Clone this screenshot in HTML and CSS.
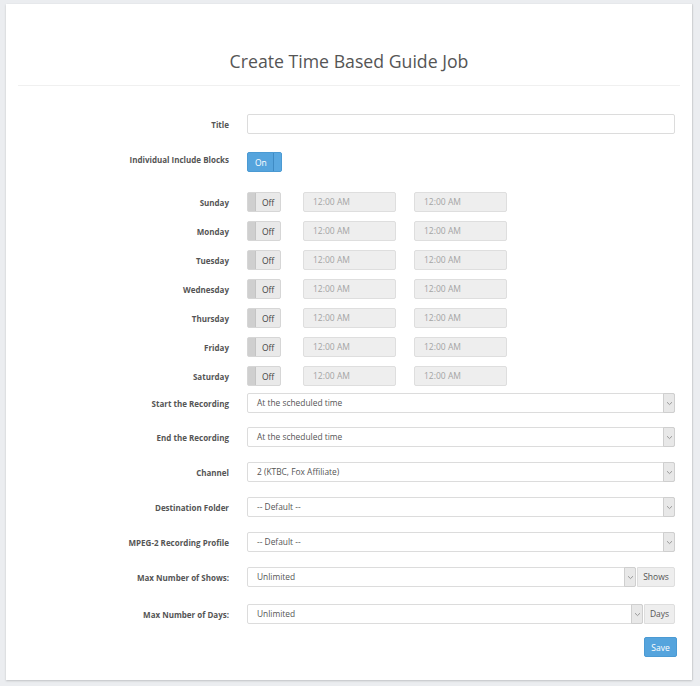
FILE: index.html
```html
<!DOCTYPE html>
<html>
<head>
<meta charset="utf-8">
<link rel="stylesheet" href="styles.css">
</head>
<body>
<div class="card">
  <h1 class="title">Create Time Based Guide Job</h1>
  <div class="rule"></div>
  <form class="form">
    <div class="row r-title">
      <label class="lbl">Title</label>
      <div class="ctl"><div class="input"></div></div>
    </div>
    <div class="row r-include">
      <label class="lbl">Individual Include Blocks</label>
      <div class="ctl"><div class="toggle on"><span class="t-text">On</span><span class="t-handle"></span></div></div>
    </div>
    <div class="row r-day first">
      <label class="lbl">Sunday</label>
      <div class="ctl"><div class="toggle off"><span class="t-handle"></span><span class="t-text">Off</span></div><div class="time">12:00 AM</div><div class="time">12:00 AM</div></div>
    </div>
    <div class="row r-day">
      <label class="lbl">Monday</label>
      <div class="ctl"><div class="toggle off"><span class="t-handle"></span><span class="t-text">Off</span></div><div class="time">12:00 AM</div><div class="time">12:00 AM</div></div>
    </div>
    <div class="row r-day">
      <label class="lbl">Tuesday</label>
      <div class="ctl"><div class="toggle off"><span class="t-handle"></span><span class="t-text">Off</span></div><div class="time">12:00 AM</div><div class="time">12:00 AM</div></div>
    </div>
    <div class="row r-day">
      <label class="lbl">Wednesday</label>
      <div class="ctl"><div class="toggle off"><span class="t-handle"></span><span class="t-text">Off</span></div><div class="time">12:00 AM</div><div class="time">12:00 AM</div></div>
    </div>
    <div class="row r-day">
      <label class="lbl">Thursday</label>
      <div class="ctl"><div class="toggle off"><span class="t-handle"></span><span class="t-text">Off</span></div><div class="time">12:00 AM</div><div class="time">12:00 AM</div></div>
    </div>
    <div class="row r-day">
      <label class="lbl">Friday</label>
      <div class="ctl"><div class="toggle off"><span class="t-handle"></span><span class="t-text">Off</span></div><div class="time">12:00 AM</div><div class="time">12:00 AM</div></div>
    </div>
    <div class="row r-day">
      <label class="lbl">Saturday</label>
      <div class="ctl"><div class="toggle off"><span class="t-handle"></span><span class="t-text">Off</span></div><div class="time">12:00 AM</div><div class="time">12:00 AM</div></div>
    </div>
    <div class="row r-sel first">
      <label class="lbl">Start the Recording</label>
      <div class="ctl"><div class="select"><span class="s-val">At the scheduled time</span><span class="s-arrow"><svg width="7" height="5" viewBox="0 0 7 5"><path d="M1 1.2 L3.5 3.6 L6 1.2" fill="none" stroke="#999" stroke-width="1"/></svg></span></div></div>
    </div>
    <div class="row r-sel second">
      <label class="lbl">End the Recording</label>
      <div class="ctl"><div class="select"><span class="s-val">At the scheduled time</span><span class="s-arrow"><svg width="7" height="5" viewBox="0 0 7 5"><path d="M1 1.2 L3.5 3.6 L6 1.2" fill="none" stroke="#999" stroke-width="1"/></svg></span></div></div>
    </div>
    <div class="row r-sel">
      <label class="lbl">Channel</label>
      <div class="ctl"><div class="select"><span class="s-val">2 (KTBC, Fox Affiliate)</span><span class="s-arrow"><svg width="7" height="5" viewBox="0 0 7 5"><path d="M1 1.2 L3.5 3.6 L6 1.2" fill="none" stroke="#999" stroke-width="1"/></svg></span></div></div>
    </div>
    <div class="row r-sel">
      <label class="lbl">Destination Folder</label>
      <div class="ctl"><div class="select"><span class="s-val">-- Default --</span><span class="s-arrow"><svg width="7" height="5" viewBox="0 0 7 5"><path d="M1 1.2 L3.5 3.6 L6 1.2" fill="none" stroke="#999" stroke-width="1"/></svg></span></div></div>
    </div>
    <div class="row r-sel">
      <label class="lbl">MPEG-2 Recording Profile</label>
      <div class="ctl"><div class="select"><span class="s-val">-- Default --</span><span class="s-arrow"><svg width="7" height="5" viewBox="0 0 7 5"><path d="M1 1.2 L3.5 3.6 L6 1.2" fill="none" stroke="#999" stroke-width="1"/></svg></span></div></div>
    </div>
    <div class="row r-sel">
      <label class="lbl">Max Number of Shows:</label>
      <div class="ctl"><div class="select grow"><span class="s-val">Unlimited</span><span class="s-arrow"><svg width="7" height="5" viewBox="0 0 7 5"><path d="M1 1.2 L3.5 3.6 L6 1.2" fill="none" stroke="#999" stroke-width="1"/></svg></span></div><div class="addon shows">Shows</div></div>
    </div>
    <div class="row r-sel last">
      <label class="lbl">Max Number of Days:</label>
      <div class="ctl"><div class="select grow"><span class="s-val">Unlimited</span><span class="s-arrow"><svg width="7" height="5" viewBox="0 0 7 5"><path d="M1 1.2 L3.5 3.6 L6 1.2" fill="none" stroke="#999" stroke-width="1"/></svg></span></div><div class="addon days">Days</div></div>
    </div>
    <div class="actions"><button type="button" class="save">Save</button></div>
  </form>
</div>
</body>
</html>
```
FILE: styles.css
```css
* { box-sizing: border-box; }
html, body { margin: 0; padding: 0; }
body {
  background: #ebedf0;
  font-family: "Open Sans", "Noto Sans", sans-serif;
  color: #555;
  width: 700px;
  height: 686px;
  overflow: hidden;
  padding-top: 4px;
}
.card {
  margin-left: 6px;
  width: 686px;
  height: 676px;
  background: #fff;
  box-shadow: 0 1px 2px rgba(0,0,0,0.18), 1px 0 1px rgba(0,0,0,0.06);
  padding: 0 17px 0 12px;
}
.title {
  margin: 0;
  padding-top: 45px;
  height: 81px;
  text-align: center;
  font-weight: 400;
  font-size: 17.7px;
  line-height: 24px;
  color: #555;
  padding-left: 5px;
}
.rule {
  height: 1px;
  background: #f0f0f0;
  margin-right: -5px;
}
.form { display: flex; flex-direction: column; }
.row { display: flex; align-items: center; height: 20px; }
.lbl {
  width: 211px;
  flex: none;
  text-align: right;
  font-size: 8px;
  font-weight: 700;
  color: #555;
}
.ctl { margin-left: 18px; flex: 1; display: flex; align-items: center; height: 20px; }
.r-title { margin-top: 28px; }
.r-include { margin-top: 18px; }
.r-include .lbl { position: relative; top: -3px; }
.r-day { margin-top: 9px; }
.r-day.first { margin-top: 20px; }
.r-sel { margin-top: 15px; }
.r-sel.first { margin-top: 7px; }
.r-sel.second { margin-top: 14px; }
.r-sel.last { margin-top: 17px; }
.input {
  width: 100%;
  height: 20px;
  border: 1px solid #dcdcdc;
  border-radius: 2px;
  background: #fff;
}
.toggle {
  width: 35px;
  height: 20px;
  border-radius: 2px;
  display: flex;
  align-items: center;
  font-size: 8.5px;
  flex: none;
}
.toggle.on {
  background: #55a4dd;
  border: 1px solid #4b9ad3;
  color: #fff;
}
.toggle.on .t-text { flex: 1; padding-left: 7px; }
.toggle.on .t-handle {
  width: 8px; height: 18px;
  border-left: 1px solid #3f8bc4;
  background: #5aa8e0;
}
.toggle.off {
  background: #e9e9e9;
  border: 1px solid #d6d6d6;
  color: #444;
  width: 34px;
}
.toggle.off .t-handle {
  width: 8px; height: 18px;
  background: #cfcfcf;
  border-right: 1px solid #c4c4c4;
}
.toggle.off .t-text { flex: 1; padding-left: 6px; }
.time {
  width: 93px;
  height: 20px;
  border: 1px solid #dedede;
  border-radius: 2px;
  background: #eeeeee;
  color: #a4a4a4;
  font-size: 8.5px;
  line-height: 18px;
  padding-left: 9px;
  margin-left: 22px;
  flex: none;
}
.time + .time { margin-left: 18px; }
.select {
  flex: 1;
  height: 20px;
  border: 1px solid #dcdcdc;
  border-radius: 2px;
  background: #fff;
  display: flex;
  align-items: stretch;
  font-size: 8.4px;
  color: #555;
}
.s-val { flex: 1; padding-left: 9px; line-height: 18px; }
.s-arrow {
  width: 12px;
  background: #e8e8e8;
  display: flex;
  align-items: center;
  justify-content: center;
  margin: -1px -1px -1px 0;
  border: 1px solid #cfcfcf;
  border-radius: 0 2px 2px 0;
}
.addon {
  height: 20px;
  background: #eeeeee;
  border: 1px solid #dedede;
  border-radius: 0 2px 2px 0;
  font-size: 8.5px;
  color: #555;
  line-height: 18px;
  text-align: center;
  margin-left: 1px;
  flex: none;
}
.addon.shows { width: 38px; }
.addon.days { width: 31px; }
.actions { display: flex; justify-content: flex-end; margin-top: 13px; }
.save {
  width: 33px;
  height: 20px;
  background: #55a4dd;
  border: 1px solid #4b9ad3;
  border-radius: 2px;
  color: #fff;
  font-family: "Open Sans", "Noto Sans", sans-serif;
  font-size: 8.5px;
  padding: 0;
  margin-right: -2px;
}
```
